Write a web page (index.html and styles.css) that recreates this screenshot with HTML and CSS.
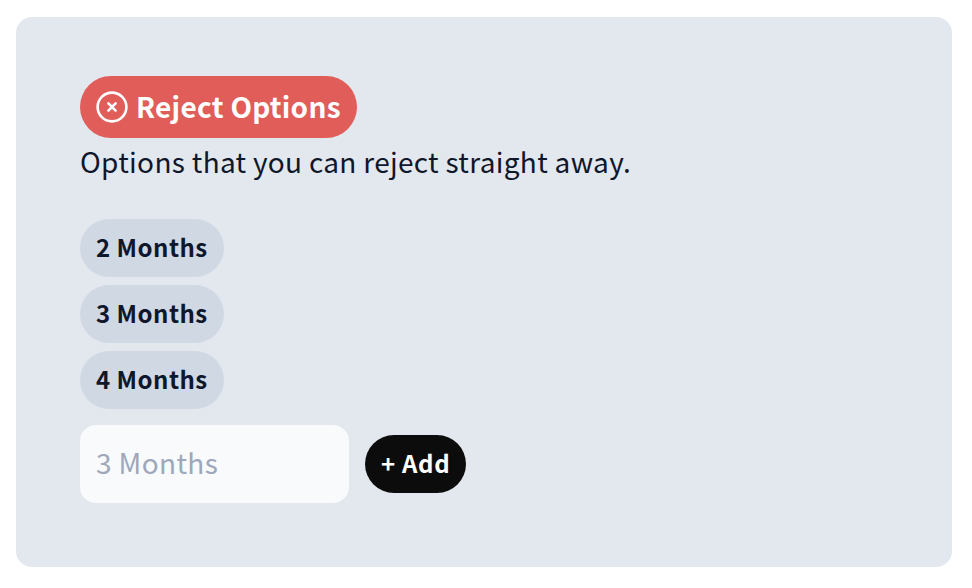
FILE: index.html
```html
<!DOCTYPE html>
<html lang="en">
<head>
<meta charset="utf-8">
<title>Reject Options</title>
<link rel="stylesheet" href="styles.css">
</head>
<body>
<section class="panel">
  <div class="badge">
    <svg class="badge-icon" viewBox="0 0 32 32" fill="none" stroke="currentColor" stroke-width="2.6" stroke-linecap="round">
      <circle cx="16" cy="16" r="14.4"/>
      <path d="M12.4 12.4l7.2 7.2M19.6 12.4l-7.2 7.2"/>
    </svg>
    <span class="badge-label">Reject Options</span>
  </div>
  <p class="desc">Options that you can reject straight away.</p>
  <ul class="options">
    <li class="chip">2 Months</li>
    <li class="chip">3 Months</li>
    <li class="chip">4 Months</li>
  </ul>
  <div class="add-row">
    <input class="field" type="text" placeholder="3 Months">
    <button class="add" type="button">+ Add</button>
  </div>
</section>
</body>
</html>
```
FILE: styles.css
```css
* { box-sizing: border-box; }
html, body { margin: 0; height: 100%; background: #fff; }
body {
  padding: 17px 20px 21px 16px;
  font-family: "Noto Sans CJK SC", "Noto Sans", sans-serif;
  color: #0f172a;
}
.panel {
  height: 550px;
  background: #e3e8ef;
  border-radius: 16px;
  padding: 59px 64px;
}
.badge {
  display: inline-flex;
  align-items: center;
  gap: 8px;
  height: 62px;
  padding: 0 16px;
  border-radius: 31px;
  background: #e05d59;
  color: #fff;
  font-size: 28px;
  font-weight: 700;
  letter-spacing: 0.28px;
}
.badge-label { margin-bottom: 2px; }
.badge-icon { width: 32px; height: 32px; }
.desc { margin: 0 0 35px; font-size: 28px; line-height: 46px; letter-spacing: 0.31px; }
.options { list-style: none; margin: 0; padding: 0; display: flex; flex-direction: column; align-items: flex-start; gap: 8px; }
.chip {
  height: 58px;
  padding: 0 16px;
  border-radius: 29px;
  background: #d0d8e3;
  font-size: 24px;
  font-weight: 700;
  line-height: 56px;
  letter-spacing: 0.48px;
}
.add-row { display: flex; align-items: center; gap: 16px; margin-top: 16px; }
.field {
  width: 269px;
  height: 78px;
  padding: 0 16px 4px;
  border: 0;
  border-radius: 16px;
  background: #f8fafc;
  font: 28px "Noto Sans CJK SC", "Noto Sans", sans-serif;
  letter-spacing: 0.36px;
  color: #0f172a;
}
.field::placeholder { color: #9ea8ba; opacity: 1; }
.add {
  height: 58px;
  padding: 0 16px 4px;
  border: 0;
  border-radius: 29px;
  background: #0c0c0c;
  color: #fff;
  font: 700 24px "Noto Sans CJK SC", "Noto Sans", sans-serif;
  letter-spacing: 0.68px;
}
```
